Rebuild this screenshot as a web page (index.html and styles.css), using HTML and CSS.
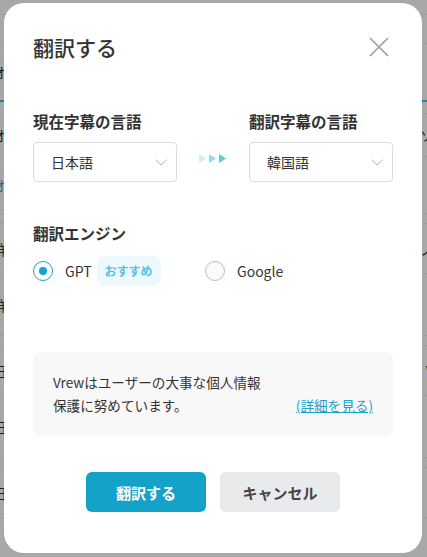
FILE: index.html
```html
<!DOCTYPE html>
<html lang="ja">
<head>
    <meta charset="UTF-8">
    <meta name="viewport" content="width=device-width, initial-scale=1.0">
    <title>翻訳する</title>
    <link rel="stylesheet" href="styles.css">
</head>
<body>
    <!-- the subtitle table behind the dialog, dimmed -->
    <div class="page">
        <div class="bg-row" style="height:15px"></div>
        <div class="bg-row" style="height:29px"><span class="l blue">]</span></div>
        <div class="bg-row bg-row-active" style="height:58px"><span class="l">オ</span></div>
        <div class="bg-row" style="height:12px"></div>
        <div class="bg-row" style="height:43px"><span class="l">オ</span><span class="r">ソ</span></div>
        <div class="bg-row" style="height:57px"><span class="l blue">オ</span></div>
        <div class="bg-row" style="height:10px"></div>
        <div class="bg-row" style="height:50px"><span class="l">鮮</span><span class="r">ノ</span></div>
        <div class="bg-row" style="height:62px"><span class="l">鮮</span></div>
        <div class="bg-row" style="height:10px"></div>
        <div class="bg-row" style="height:50px"><span class="l">日</span><span class="r">V</span></div>
        <div class="bg-row" style="height:62px"><span class="l">日</span></div>
        <div class="bg-row" style="height:10px"></div>
        <div class="bg-row" style="height:50px"><span class="l">日</span></div>
        <div class="bg-row" style="height:60px"></div>
    </div>

    <div class="overlay">
        <div class="dialog">
            <div class="dialog-head">
                <h1>翻訳する</h1>
                <button class="close" aria-label="閉じる">
                    <svg width="20" height="20" viewBox="0 0 20 20">
                        <path d="M1 1 L19 19 M19 1 L1 19" stroke="#9b9b9b" stroke-width="1.6" fill="none"/>
                    </svg>
                </button>
            </div>

            <div class="lang-grid">
                <div class="lang-col">
                    <div class="field-label">現在字幕の言語</div>
                    <div class="select">
                        <span>日本語</span>
                        <svg width="12" height="7" viewBox="0 0 12 7"><path d="M0.5 0.5 L6 6 L11.5 0.5" stroke="#b5b5b5" stroke-width="1" fill="none"/></svg>
                    </div>
                </div>
                <div class="arrows">
                    <svg width="28" height="9" viewBox="0 0 28 9">
                        <path d="M0 0 L7 4.5 L0 9 Z" fill="#cdeef9"/>
                        <path d="M10 0 L17 4.5 L10 9 Z" fill="#94daf2"/>
                        <path d="M20 0 L27 4.5 L20 9 Z" fill="#5ec8ec"/>
                    </svg>
                </div>
                <div class="lang-col">
                    <div class="field-label">翻訳字幕の言語</div>
                    <div class="select">
                        <span>韓国語</span>
                        <svg width="12" height="7" viewBox="0 0 12 7"><path d="M0.5 0.5 L6 6 L11.5 0.5" stroke="#b5b5b5" stroke-width="1" fill="none"/></svg>
                    </div>
                </div>
            </div>

            <div class="engine">
                <div class="field-label">翻訳エンジン</div>
                <div class="engine-options">
                    <div class="radio checked"><span class="dot"></span>GPT<span class="badge">おすすめ</span></div>
                    <div class="radio"><span class="dot"></span>Google</div>
                </div>
            </div>

            <div class="notice">
                <p>Vrewはユーザーの大事な個人情報<br>保護に努めています。</p>
                <a href="#">(詳細を見る)</a>
            </div>

            <div class="actions">
                <button class="btn btn-primary">翻訳する</button>
                <button class="btn btn-secondary">キャンセル</button>
            </div>
        </div>
    </div>
</body>
</html>
```

FILE: styles.css
```css
body {
    margin: 0;
    font-family: "Noto Sans CJK JP", "Noto Sans", sans-serif;
    background-color: #a8a8a8;
    color: #333;
    overflow: hidden;
}

.page {
    height: 557px;
}

.bg-row {
    display: flex;
    justify-content: space-between;
    align-items: center;
    box-sizing: border-box;
    border-bottom: 1px solid #9c9c9c;
    color: #1e1e1e;
    font-size: 14px;
}

.bg-row-active {
    border-bottom: 2px solid #2f7f97;
}

.bg-row .l {
    margin-left: -7px;
}

.bg-row .r {
    margin-left: auto;
    margin-right: -7px;
}

.bg-row .blue {
    color: #2a6f86;
}

.overlay {
    position: fixed;
    inset: 0;
    padding: 3px 5px 4px 4px;
}

.dialog {
    height: 100%;
    box-sizing: border-box;
    background: #fff;
    border-radius: 20px;
    padding: 29px 29px 0;
}

.dialog-head {
    display: flex;
    justify-content: space-between;
    align-items: center;
}

.dialog-head h1 {
    margin: 0;
    font-size: 21px;
    line-height: 30px;
    font-weight: 500;
    color: #333;
}

.close {
    width: 20px;
    height: 20px;
    padding: 0;
    margin-right: 4px;
    border: none;
    background: none;
    display: flex;
}

.lang-grid {
    margin-top: 48px;
    display: grid;
    grid-template-columns: 144px 1fr 144px;
}

.field-label {
    font-size: 15.5px;
    line-height: 22px;
    font-weight: 700;
    color: #333;
}

.lang-col .field-label {
    margin-bottom: 10px;
}

.select {
    height: 40px;
    box-sizing: border-box;
    border: 1px solid #dcdcdc;
    border-radius: 4px;
    padding: 0 9px 0 17px;
    display: flex;
    align-items: center;
    justify-content: space-between;
    font-size: 14px;
    color: #333;
}

.arrows {
    align-self: end;
    margin-bottom: 19px;
    display: flex;
    justify-content: center;
    height: 9px;
}

.engine {
    margin-top: 40px;
}

.engine .field-label {
    margin-bottom: 12px;
}

.engine-options {
    display: grid;
    grid-template-columns: 172px auto;
    align-items: center;
    height: 30px;
}

.radio {
    display: flex;
    align-items: center;
    font-size: 14px;
    color: #333;
}

.dot {
    width: 20px;
    height: 20px;
    box-sizing: border-box;
    border: 1px solid #bdbdbd;
    border-radius: 50%;
    background: #fafafa;
    margin-right: 12px;
    display: flex;
    align-items: center;
    justify-content: center;
}

.radio.checked .dot {
    border: 1.5px solid #1aa3cc;
    background: #fff;
}

.radio.checked .dot::after {
    content: "";
    width: 8px;
    height: 8px;
    border-radius: 50%;
    background: #1aa3cc;
}

.badge {
    margin-left: 5px;
    height: 30px;
    line-height: 30px;
    padding: 0 8px;
    border-radius: 8px;
    background: #eef9fd;
    color: #4dc2ea;
    font-size: 12px;
    font-weight: 700;
}

.notice {
    margin-top: 66px;
    background: #f8f8f8;
    border-radius: 8px;
    padding: 19px 20px;
    display: flex;
    justify-content: space-between;
    align-items: flex-end;
    font-size: 13.6px;
    line-height: 23px;
}

.notice p {
    margin: 0;
    color: #333;
}

.notice a {
    color: #1ba2cc;
    text-decoration: underline;
}

.actions {
    margin-top: 36px;
    display: flex;
    justify-content: center;
    gap: 14px;
}

.btn {
    width: 120px;
    height: 40px;
    border: none;
    border-radius: 6px;
    font-family: inherit;
    font-size: 15px;
    font-weight: 700;
    cursor: pointer;
}

.btn-primary {
    background-color: #14a2c9;
    color: #fff;
}

.btn-secondary {
    background-color: #e9eaec;
    color: #444;
}
```
